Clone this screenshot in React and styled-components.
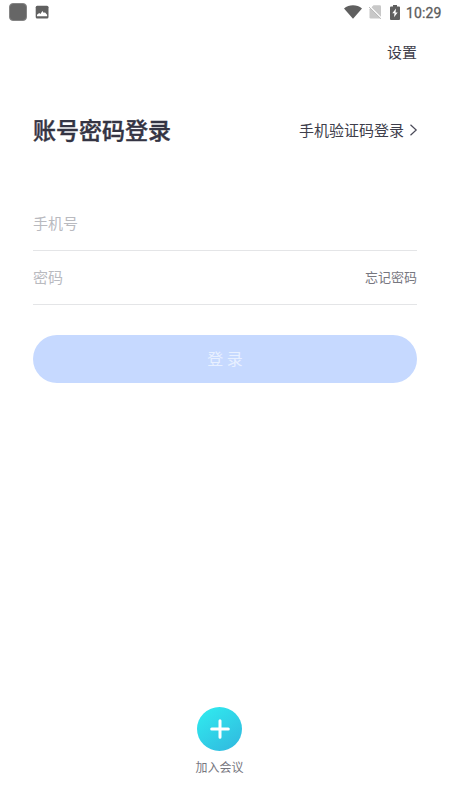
import styled, { createGlobalStyle } from "styled-components";

const GlobalStyle = createGlobalStyle`
  * {
    box-sizing: border-box;
  }
  body {
    margin: 0;
    background-color: #fff;
    font-family: "Noto Sans CJK SC", sans-serif;
  }
  button, input {
    font-family: inherit;
    border: 0;
    padding: 0;
    margin: 0;
    background: none;
  }
`;

const Screen = styled.div`
  display: flex;
  flex-direction: column;
  height: 800px;
  background-color: #fff;
  overflow: hidden;
`;

const StatusBar = styled.div`
  display: flex;
  justify-content: space-between;
  align-items: center;
  height: 24px;
  padding: 0 8px 0 9px;
`;

const StatusGroup = styled.div`
  display: flex;
  align-items: center;
  svg {
    display: block;
  }
`;

const SystemIcons = styled.div`
  display: grid;
  grid-template-columns: 18px 14px 10px;
  align-items: center;
  column-gap: 7px;
`;

const AppSquare = styled.div`
  width: 18px;
  height: 18px;
  margin-right: 8px;
  border: 1px solid #858585;
  border-radius: 4px;
  background-color: #666;
`;

const Clock = styled.span`
  width: 36px;
  margin-left: 6px;
  padding-top: 2px;
  color: #5c5c5c;
  font-family: Roboto, sans-serif;
  font-size: 14px;
  font-weight: 400;
  -webkit-text-stroke: 0.3px #5c5c5c;
  letter-spacing: 0.1px;
  line-height: 22px;
  white-space: nowrap;
`;

const TopBar = styled.div`
  display: flex;
  justify-content: flex-end;
  padding: 16px 33px 0;
`;

const TextButton = styled.button`
  display: flex;
  align-items: center;
  flex-shrink: 0;
  color: ${(props) => props.$color || "#3e3e4b"};
  font-size: ${(props) => props.$size || 15}px;
  line-height: 24px;
  white-space: nowrap;
`;

const Heading = styled.div`
  display: flex;
  justify-content: space-between;
  align-items: center;
  height: 36px;
  margin-top: 48px;
  padding: 0 32px 0 33px;
  svg {
    margin-left: 5px;
  }
`;

const Title = styled.h1`
  margin: 0;
  padding-bottom: 2px;
  color: #343443;
  font-size: 23px;
  font-weight: 500;
  -webkit-text-stroke: 0.4px #343443;
  line-height: 34px;
`;

const Form = styled.form`
  margin-top: 48px;
  padding: 0 33px;
`;

const Field = styled.div`
  display: flex;
  align-items: center;
  height: ${(props) => props.$height}px;
  padding-bottom: 2px;
  border-bottom: 1px solid #e4e5e7;
`;

const Input = styled.input`
  flex: 1;
  min-width: 0;
  height: 30px;
  color: #2d2d3d;
  font-size: 15px;
  outline: none;
  &::placeholder {
    color: #b9babf;
    opacity: 1;
  }
`;

const LoginButton = styled.button`
  width: 100%;
  height: 48px;
  margin-top: 30px;
  padding-bottom: 2px;
  border-radius: 24px;
  background-color: #c6d9ff;
  color: #e8f0ff;
  font-size: 16px;
  line-height: 46px;
`;

const Footer = styled.div`
  display: flex;
  flex-direction: column;
  align-items: center;
  margin-top: auto;
  padding: 0 11px 23px 0;
`;

const JoinButton = styled.button`
  display: flex;
  align-items: center;
  justify-content: center;
  width: 45px;
  height: 44px;
  border-radius: 50%;
  background: linear-gradient(145deg, #30e8ee 10%, #31b9df 95%);
`;

const JoinLabel = styled.span`
  margin-top: 6px;
  color: #77777f;
  font-size: 12px;
  line-height: 20px;
`;

function PictureIcon() {
  return (
    <svg width="14" height="14" viewBox="0 0 14 14">
      <rect x="0.7" y="0.7" width="12.8" height="12.8" rx="1.5" fill="#606060" />
      <path d="M2 11.2V9.8l2.2-1.9 1.2 1 2-2.8 1.5 2 1-.8 2.2 2.5v1.4z" fill="#fff" />
    </svg>
  );
}

function WifiIcon() {
  return (
    <svg width="18" height="14" viewBox="0 0 18 14">
      <path d="M0 3.5C5-.7 13-.7 18 3.5L9 13.8z" fill="#5f5f5f" />
    </svg>
  );
}

function NoSimIcon() {
  return (
    <svg width="14" height="14" viewBox="0 0 14 14">
      <path d="M4.5.3h6.3q1.2 0 1.2 1.2v10.8q0 1.2-1.2 1.2H1.7q-1.2 0-1.2-1.2V4.3z" fill="#c8c8c8" />
      <path d="M.3 1 12.5 13.2" stroke="#fff" strokeWidth="1.2" />
      <path d="M-.4 1.7 11.8 13.9" stroke="#b8b8b8" strokeWidth="1" />
    </svg>
  );
}

function BatteryIcon() {
  return (
    <svg width="10" height="15" viewBox="0 0 10 15">
      <path d="M3 0h4v1.5h2q1 0 1 1V14q0 1-1 1H1q-1 0-1-1V2.5q0-1 1-1h2z" fill="#5f5f5f" />
      <path d="M6 3.5 2.3 8.3h2.2L4 12.3l3.7-4.9H5.5z" fill="#fff" />
    </svg>
  );
}

export default function App() {
  return (
    <>
      <GlobalStyle />
      <Screen>
        <StatusBar>
          <StatusGroup>
            <AppSquare />
            <PictureIcon />
          </StatusGroup>
          <StatusGroup>
            <SystemIcons>
              <WifiIcon />
              <NoSimIcon />
              <BatteryIcon />
            </SystemIcons>
            <Clock>10:29</Clock>
          </StatusGroup>
        </StatusBar>
        <TopBar>
          <TextButton>设置</TextButton>
        </TopBar>
        <Heading>
          <Title>账号密码登录</Title>
          <TextButton>
            手机验证码登录
            <svg width="9" height="12" viewBox="0 0 9 12" fill="none">
              <path d="M1.5.7 7.2 6l-5.7 5.3" stroke="#4a4a58" strokeWidth="1.2" />
            </svg>
          </TextButton>
        </Heading>
        <Form onSubmit={(e) => e.preventDefault()}>
          <Field $height={55}>
            <Input type="tel" placeholder="手机号" />
          </Field>
          <Field $height={54}>
            <Input type="password" placeholder="密码" />
            <TextButton type="button" $size={13} $color="#77777f">
              忘记密码
            </TextButton>
          </Field>
          <LoginButton>登 录</LoginButton>
        </Form>
        <Footer>
          <JoinButton aria-label="加入会议">
            <svg width="20" height="20" viewBox="0 0 20 20">
              <path d="M10 1.7v16.6M1.7 10h16.6" stroke="#fff" strokeWidth="3" strokeLinecap="round" />
            </svg>
          </JoinButton>
          <JoinLabel>加入会议</JoinLabel>
        </Footer>
      </Screen>
    </>
  );
}
